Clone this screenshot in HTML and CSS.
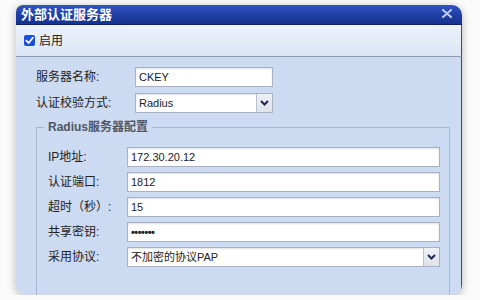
FILE: index.html
```html
<!DOCTYPE html>
<html lang="zh-CN">
<head>
    <meta charset="UTF-8">
    <title>外部认证服务器</title>
    <link rel="stylesheet" href="styles.css">
</head>
<body>
    <div class="dialog">
        <!-- Title bar -->
        <div class="titlebar">
            <span class="title">外部认证服务器</span>
            <svg class="close" width="10" height="9" viewBox="0 0 10 9">
                <path d="M1 1 L9 8 M9 1 L1 8" stroke="#c3cdef" stroke-width="2" stroke-linecap="round"/>
            </svg>
        </div>

        <!-- Enable toggle -->
        <div class="toolbar">
            <span class="check">
                <svg width="11" height="11" viewBox="0 0 11 11">
                    <path d="M2.3 5.6 L4.6 8 L8.8 2.8" stroke="#fff" stroke-width="1.8" fill="none" stroke-linecap="round" stroke-linejoin="round"/>
                </svg>
            </span>
            <span>启用</span>
        </div>

        <div class="content">
            <div class="row">
                <span class="label">服务器名称:</span>
                <div class="field short">CKEY</div>
            </div>
            <div class="row">
                <span class="label">认证校验方式:</span>
                <div class="field short select">
                    <span>Radius</span>
                    <span class="arrow">
                        <svg width="9" height="6" viewBox="0 0 9 6"><path d="M1 1 L4.5 4.5 L8 1" stroke="#1e2a52" stroke-width="2" fill="none"/></svg>
                    </span>
                </div>
            </div>

            <fieldset class="group">
                <legend>Radius服务器配置</legend>
                <div class="row inner">
                    <span class="label">IP地址:</span>
                    <div class="field">172.30.20.12</div>
                </div>
                <div class="row inner">
                    <span class="label">认证端口:</span>
                    <div class="field">1812</div>
                </div>
                <div class="row inner">
                    <span class="label">超时（秒）:</span>
                    <div class="field">15</div>
                </div>
                <div class="row inner">
                    <span class="label">共享密钥:</span>
                    <div class="field secret">•••••••</div>
                </div>
                <div class="row inner">
                    <span class="label">采用协议:</span>
                    <div class="field select">
                        <span>不加密的协议PAP</span>
                        <span class="arrow">
                            <svg width="9" height="6" viewBox="0 0 9 6"><path d="M1 1 L4.5 4.5 L8 1" stroke="#1e2a52" stroke-width="2" fill="none"/></svg>
                        </span>
                    </div>
                </div>
            </fieldset>
        </div>
    </div>
</body>
</html>
```

FILE: styles.css
```css
body {
    margin: 0;
    background-color: #fbfbfc;
    font-family: "Liberation Sans", "Noto Sans CJK SC", sans-serif;
    font-size: 11px;
    line-height: 14px;
    color: #222;
}

.dialog {
    width: 446px;
    height: 290px;
    margin: 5px 0 0 16px;
    border-radius: 7px 10px 10px 10px;
    overflow: hidden;
    background-color: #cddbf2;
    box-shadow: 0 2px 10px rgba(0, 0, 0, 0.28);
    display: flex;
    flex-direction: column;
}

.titlebar {
    flex-shrink: 0;
    height: 19px;
    border-bottom: 1px solid #0e2568;
    background: linear-gradient(#3455bf, #1e3ea3 55%, #16338f);
    display: flex;
    align-items: center;
    justify-content: space-between;
    padding: 0 10px 0 5px;
}

.title {
    color: #fff;
    font-size: 13px;
    font-weight: bold;
    line-height: 16px;
}

.close {
    margin-top: -3px;
}

.toolbar {
    flex-shrink: 0;
    height: 31px;
    border-bottom: 1px solid #8f9bb0;
    background: linear-gradient(#eef3fb, #dbe5f5);
    display: flex;
    align-items: center;
    gap: 4px;
    padding-left: 8px;
    border-right: 1px solid #454c5a;
    font-size: 12px;
}

.check {
    width: 11px;
    height: 11px;
    border-radius: 2px;
    background-color: #1c4fd9;
    display: flex;
}

.content {
    flex: 1;
    min-height: 0;
    padding: 10px 0 0 20px;
    border-right: 1px solid #454c5a;
}

.row {
    display: flex;
    align-items: center;
    height: 20px;
    margin-bottom: 6px;
}

.row .label {
    width: 99px;
    font-size: 12px;
}

.row.inner {
    margin-bottom: 5px;
}

.row.inner .label {
    width: 79px;
}

.field {
    flex: 1;
    height: 20px;
    box-sizing: border-box;
    border: 1px solid #a7b1c3;
    background-color: #fff;
    box-shadow: inset 0 1px 2px rgba(0, 0, 0, 0.12);
    padding-left: 3px;
    display: flex;
    align-items: center;
}

.field.short {
    flex: none;
    width: 138px;
}

.secret {
    font-weight: bold;
    letter-spacing: -0.5px;
}

.select .arrow {
    margin-left: auto;
    width: 15px;
    height: 100%;
    border-left: 1px solid #b9c1cd;
    background: linear-gradient(#eef0f4, #dfe3ea);
    display: flex;
    align-items: center;
    justify-content: center;
}

.group {
    margin: 7px 11px 0 0;
    border: 1px solid #a6b6d0;
    padding: 13px 9px 40px 11px;
    min-width: 0;
}

.group legend {
    font-size: 12px;
    font-weight: bold;
    line-height: 14px;
    color: #4f5664;
    padding: 0 4px;
    margin-left: -4px;
}
```
